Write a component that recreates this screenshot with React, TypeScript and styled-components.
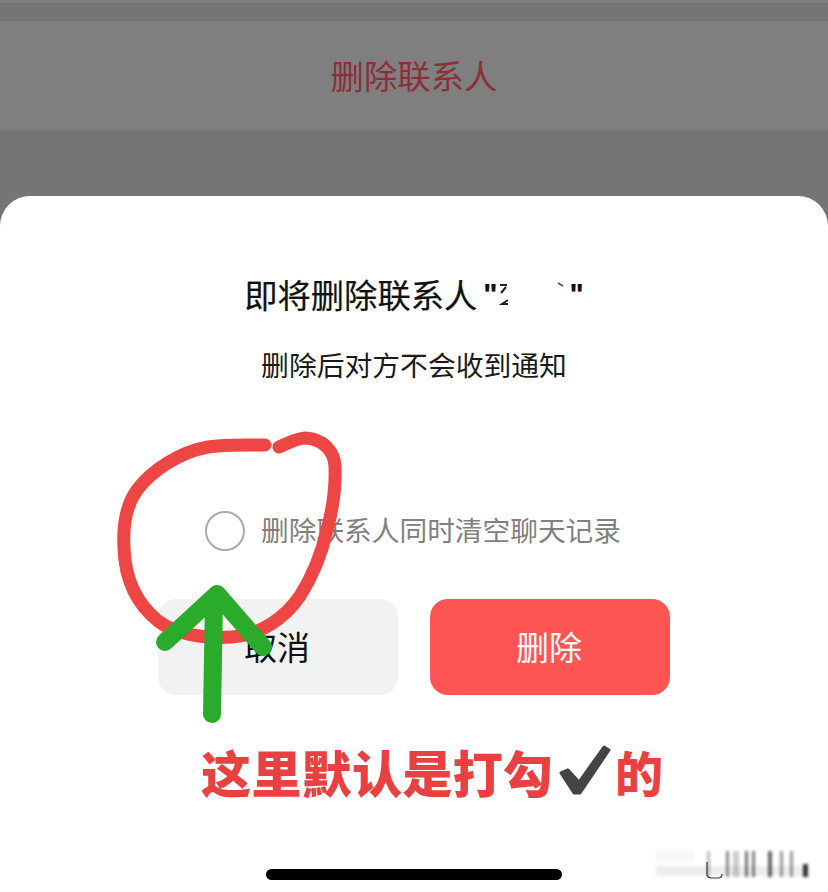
import styled, { createGlobalStyle } from "styled-components"

const GlobalStyle = createGlobalStyle`
    html, body {
        margin: 0;
        padding: 0;
        background: #757575;
    }

    body {
        font-family: "Noto Sans CJK SC", "Noto Sans", sans-serif;
    }
`

const Page = styled.div`
    position: relative;
    display: flex;
    flex-direction: column;
    width: 828px;
    height: 892px;
    overflow: hidden;
    background: #757575;
`

const TopStrip = styled.div`
    height: 3px;
    margin-bottom: 18px;
    background: #808080;
`

const DeleteRow = styled.div`
    display: flex;
    align-items: center;
    justify-content: center;
    box-sizing: border-box;
    height: 109px;
    margin-bottom: 66px;
    padding-bottom: 2px;
    background: #7f7f7f;
    color: #8c2f36;
    font-size: 33.4px;
`

const Sheet = styled.div`
    display: flex;
    flex: 1;
    flex-direction: column;
    align-items: center;
    padding: 76px 0 12px;
    border-radius: 30px 30px 0 0;
    background: #ffffff;
`

const Title = styled.div`
    display: flex;
    align-items: center;
    height: 44px;
    color: #111111;
    font-size: 33.3px;
    line-height: 44px;
    -webkit-text-stroke: 0.2px #111111;
`

const Quote = styled.span`
    font-size: 30px;
    font-weight: 700;
    font-family: "Liberation Sans", sans-serif;
    margin-left: ${({ $gap }: { $gap?: number }) => $gap ?? 0}px;
`

const Subtitle = styled.div`
    height: 40px;
    margin-top: 28px;
    color: #1a1a1a;
    font-size: 27.8px;
    line-height: 40px;
`

const Option = styled.div`
    display: flex;
    align-items: center;
    gap: 16px;
    height: 40px;
    margin-top: 127px;
    margin-right: 2px;
`

const Radio = styled.span`
    box-sizing: border-box;
    width: 40px;
    height: 40px;
    border: 2px solid #aaaaaa;
    border-radius: 50%;
`

const OptionLabel = styled.span`
    margin-bottom: 3px;
    color: #808080;
    font-size: 27.7px;
    line-height: 37px;
`

const Buttons = styled.div`
    display: flex;
    gap: 32px;
    margin-top: 48px;
`

const ActionButton = styled.button<{ $danger?: boolean }>`
    width: 240px;
    height: 96px;
    padding: 0 2px 3px 0;
    border: none;
    border-radius: 18px;
    background: ${({ $danger }) => ($danger ? "#ff5555" : "#f2f2f2")};
    color: ${({ $danger }) => ($danger ? "#ffffff" : "#111111")};
    font-family: inherit;
    font-size: 33px;
`

const HomeBar = styled.div`
    width: 296px;
    height: 11px;
    margin-top: auto;
    border-radius: 6px;
    background: #000000;
`

const Overlay = styled.svg`
    position: absolute;
    top: 0;
    left: 0;
    pointer-events: none;
`

const Note = styled.div`
    position: absolute;
    top: 735px;
    left: 201px;
    display: flex;
    align-items: center;
    height: 72px;
    color: #e94141;
    font-size: 50.3px;
    font-weight: 900;
    line-height: 72px;
    white-space: nowrap;
`

const NoteEnd = styled.span`
    font-size: 48px;
`

const bars = [
    { x: 707, w: 3, o: 0.25 },
    { x: 726, w: 3, o: 0.45 },
    { x: 733, w: 6, o: 0.2 },
    { x: 745, w: 3, o: 0.55 },
    { x: 752, w: 3, o: 0.5 },
    { x: 768, w: 4, o: 0.6 },
    { x: 780, w: 3, o: 0.4 },
    { x: 790, w: 3, o: 0.4 },
]

export default function App() {
    return (
        <Page>
            <GlobalStyle />
            <TopStrip />
            <DeleteRow>删除联系人</DeleteRow>
            <Sheet>
                <Title>
                    即将删除联系人
                    <Quote $gap={6}>"</Quote>
                    <svg width="72" height="30" viewBox="0 0 72 30">
                        <path d="M2 6 L9 6 M8 8 L3 14 M10 21 L4 25 L10 25" fill="none" stroke="#222" strokeWidth="2" />
                        <path d="M60 4 L65 7" fill="none" stroke="#555" strokeWidth="2" />
                    </svg>
                    <Quote>"</Quote>
                </Title>
                <Subtitle>删除后对方不会收到通知</Subtitle>
                <Option>
                    <Radio />
                    <OptionLabel>删除联系人同时清空聊天记录</OptionLabel>
                </Option>
                <Buttons>
                    <ActionButton>取消</ActionButton>
                    <ActionButton $danger>删除</ActionButton>
                </Buttons>
                <HomeBar />
            </Sheet>

            <Overlay width="828" height="892" viewBox="0 0 828 892">
                <defs>
                    <filter id="smear" x="-10%" y="-50%" width="120%" height="200%">
                        <feGaussianBlur stdDeviation="1.4" />
                    </filter>
                </defs>
                <path
                    d="M265 445 C245 445 225 444 208 447 C180 452 152 470 137 490 C124 508 123 530 124 548 C125 580 137 604 158 621 C175 634 203 639 232 637 C260 635 284 619 300 596 C314 574 322 552 327 530 C333 508 336 490 335 466 C334 450 322 439 306 438 C296 438 287 444 279 447"
                    fill="none"
                    stroke="#ee4545"
                    strokeWidth="13"
                    strokeLinecap="round"
                />
                <path
                    d="M165 642 L217 594 L263 647 M214 600 L212 714"
                    fill="none"
                    stroke="#2bab2b"
                    strokeWidth="18"
                    strokeLinecap="round"
                    strokeLinejoin="round"
                />
                <g filter="url(#smear)">
                    <rect x="656" y="866" width="150" height="10" fill="#000" opacity="0.07" />
                    <rect x="656" y="850" width="38" height="12" fill="#000" opacity="0.03" />
                    {bars.map((bar) => (
                        <rect key={bar.x} x={bar.x} y="851" width={bar.w} height="26" fill="#000" opacity={bar.o} />
                    ))}
                    <rect x="803" y="864" width="5" height="13" fill="#000" opacity="0.8" />
                </g>
                <path d="M707 862 L707 874 Q707 878 712 878 L718 878 Q722 878 722 874" fill="none" stroke="#333" strokeWidth="1.2" />
            </Overlay>

            <Note>
                这里默认是打勾
                <svg width="62" height="60" viewBox="0 0 62 60">
                    <path
                        d="M8 32 L15 29 L26 41 L51 6 L56 9 L27 52 L21 52 Z"
                        fill="#444444"
                        stroke="#444444"
                        strokeWidth="3"
                        strokeLinejoin="round"
                    />
                </svg>
                <NoteEnd>的</NoteEnd>
            </Note>
        </Page>
    )
}
